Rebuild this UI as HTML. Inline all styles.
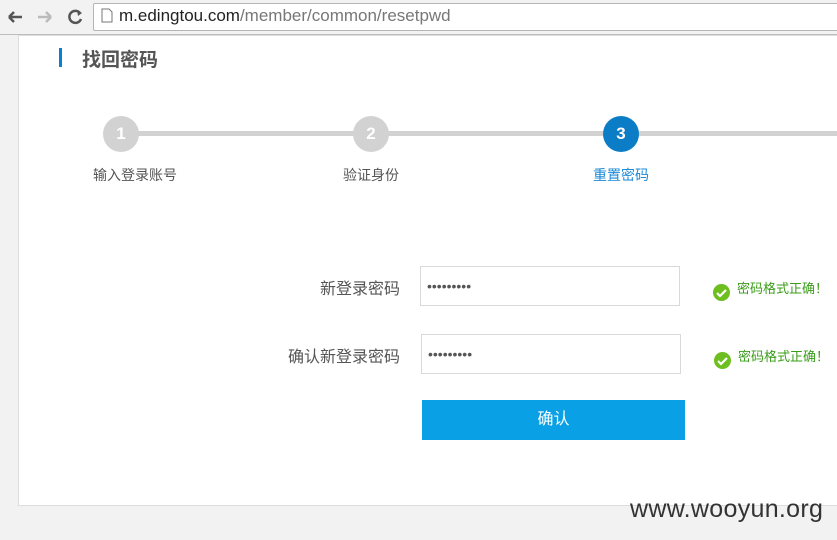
<!DOCTYPE html>
<html><head><meta charset="utf-8"><style>
body{margin:0;width:837px;height:540px;background:#f2f2f2;position:relative;overflow:hidden;font-family:"Liberation Sans","Noto Sans CJK SC",sans-serif}
.a{position:absolute}
.bar{left:0;top:0;width:837px;height:34px;background:#f2f2f2;border-bottom:1px solid #bdbdbd}
.url{left:93px;top:3px;width:760px;height:26px;background:#fff;border:1px solid #b5b5b5;border-radius:2px}
.panel{left:18px;top:35px;width:830px;height:469px;background:#fff;border:1px solid #ddd}
.c{width:36px;height:36px;border-radius:50%;background:#d2d2d2;color:#fff;font-weight:bold;font-size:17px;text-align:center;line-height:36px}
.line{height:5px;background:#d2d2d2;top:131px}
.lbl{font-size:14px;color:#555;top:165px}
.inp{width:260px;height:40px;border:1px solid #d9d9d9;background:#fff;font-size:14px;color:#555;line-height:38px;padding-left:6px;box-sizing:border-box}
.ok{font-size:13px;color:#3a9c1a}
.ck{width:17px;height:17px;border-radius:50%;background:#6cbf1f}
.fl{font-size:16px;color:#555;text-align:right;width:200px;left:200px}
</style></head><body>
<div class="a bar"></div>
<svg class="a" style="left:6px;top:8px" width="80" height="18"><path d="M3 9H16M3 9l5-5M3 9l5 5" stroke="#555" stroke-width="2.5" fill="none"/><path d="M32 9H45M45 9l-5-5M45 9l-5 5" stroke="#bbb" stroke-width="2.5" fill="none"/><path d="M74 5A6 6 0 1 0 75 11" stroke="#555" stroke-width="2.5" fill="none"/><path d="M71 2l5 3-4 3z" fill="#555"/></svg>
<div class="a url"></div>
<svg class="a" style="left:101px;top:8px" width="12" height="15"><path d="M1 1h7l3 3v10H1z" fill="none" stroke="#777"/></svg>
<div class="a" style="left:119px;top:6px;font-size:17px;color:#222">m.edingtou.com<span style="color:#777">/member/common/resetpwd</span></div>
<div class="a panel"></div>
<div class="a" style="left:59px;top:48px;width:3px;height:19px;background:#0b7fd0"></div>
<div class="a" style="left:82px;top:45px;font-size:19px;font-weight:bold;color:#555">找回密码</div>
<div class="a line" style="left:138px;width:218px"></div>
<div class="a line" style="left:388px;width:218px"></div>
<div class="a line" style="left:638px;width:199px"></div>
<div class="a c" style="left:103px;top:116px">1</div>
<div class="a c" style="left:353px;top:116px">2</div>
<div class="a c" style="left:603px;top:116px;background:#0b7cc6">3</div>
<div class="a lbl" style="left:93px">输入登录账号</div>
<div class="a lbl" style="left:343px">验证身份</div>
<div class="a lbl" style="left:593px;color:#1c8ad6">重置密码</div>
<div class="a fl" style="top:275px">新登录密码</div>
<div class="a fl" style="top:343px">确认新登录密码</div>
<div class="a inp" style="left:420px;top:266px">•••••••••</div>
<div class="a inp" style="left:421px;top:334px">•••••••••</div>
<div class="a ck" style="left:713px;top:284px"></div>
<div class="a ck" style="left:714px;top:352px"></div>
<svg class="a" style="left:713px;top:284px" width="17" height="17"><path d="M4 9l3 3 6-6" stroke="#fff" stroke-width="2.2" fill="none"/></svg>
<svg class="a" style="left:714px;top:352px" width="17" height="17"><path d="M4 9l3 3 6-6" stroke="#fff" stroke-width="2.2" fill="none"/></svg>
<div class="a ok" style="left:737px;top:278px">密码格式正确！</div>
<div class="a ok" style="left:738px;top:346px">密码格式正确！</div>
<div class="a" style="left:422px;top:400px;width:263px;height:40px;background:#0aa0e6;color:#fff;font-size:16px;text-align:center;line-height:40px">确认</div>
<div class="a" style="left:630px;top:495px;font-size:25px;color:#333;letter-spacing:0.3px">www.wooyun.org</div>
</body></html>
